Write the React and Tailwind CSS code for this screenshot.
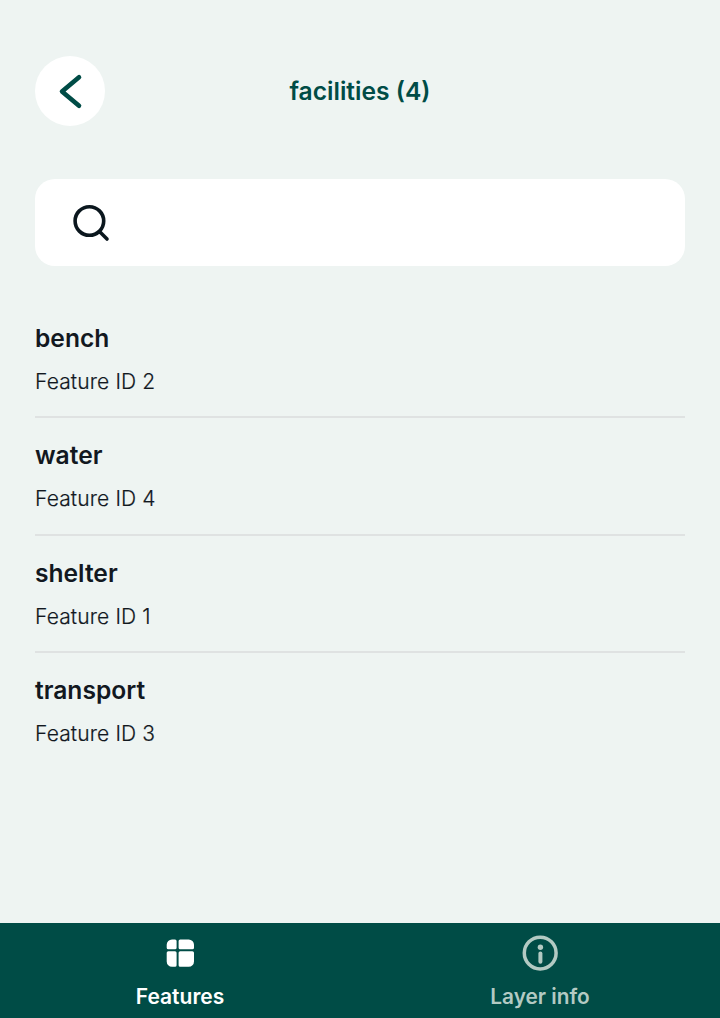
const features = [
  { name: 'bench', id: 2 },
  { name: 'water', id: 4 },
  { name: 'shelter', id: 1 },
  { name: 'transport', id: 3 },
];

export default function App() {
  return (
    <div className="flex h-[1018px] w-full flex-col bg-[#eef4f2] font-['Inter',sans-serif]">
      <header className="mt-14 grid grid-cols-[70px_1fr_70px] items-center px-[35px]">
        <button aria-label="Back" className="flex size-[70px] items-center justify-center rounded-full bg-white">
          <svg width="70" height="70" viewBox="0 0 70 70" fill="none" stroke="#004c46" strokeWidth="4.6">
            <path d="M44 21.2 27 35.4 44 49.8" strokeLinecap="round" strokeLinejoin="round" />
          </svg>
        </button>
        <h1 className="text-center text-[24.6px] leading-8 font-semibold text-[#004c46]">facilities (4)</h1>
      </header>
      <div className="mx-[35px] mt-[53px] flex h-[87px] shrink-0 items-center rounded-[20px] bg-white pl-[35px]">
        <svg width="42" height="42" viewBox="0 0 42 42" fill="none" stroke="#0b171e" strokeWidth="3.6" strokeLinecap="round">
          <circle cx="19.4" cy="19" r="14.3" />
          <path d="m30 30 7 7" />
        </svg>
      </div>
      <main className="mx-[35px] mt-[35px] flex-1">
        {features.map((f) => (
          <div key={f.id} className="flex h-[117.4px] flex-col border-b-2 border-[#dfe2e2] pt-[21px] last:border-0">
            <h2 className="text-[24.6px] leading-8 font-semibold text-[#12181f]">{f.name}</h2>
            <p className="mt-[13px] text-[21px] leading-[30px] font-light tracking-[0.13px] text-[#12181f] [-webkit-text-stroke:0.2px_#12181f]">Feature ID {f.id}</p>
          </div>
        ))}
      </main>
      <nav className="grid h-[95px] shrink-0 grid-cols-2 bg-[#004c46]">
        <button className="flex flex-col items-center pt-3 text-white">
          <svg width="36" height="36" viewBox="0 0 36 36" fill="currentColor">
            <path d="M10 4.5h3a1.6 1.6 0 0 1 1.6 1.6v6.6a1.6 1.6 0 0 1-1.6 1.6H6.3a1.6 1.6 0 0 1-1.6-1.6V9.8A5.3 5.3 0 0 1 10 4.5Z" />
            <path d="M18.2 4.5h8.5A5.3 5.3 0 0 1 32 9.8v2.9a1.6 1.6 0 0 1-1.6 1.6H18.2a1.6 1.6 0 0 1-1.6-1.6V6.1a1.6 1.6 0 0 1 1.6-1.6Z" />
            <path d="M6.3 16.2H13a1.6 1.6 0 0 1 1.6 1.6v12.4a1.6 1.6 0 0 1-1.6 1.6h-3a5.3 5.3 0 0 1-5.3-5.3v-8.7a1.6 1.6 0 0 1 1.6-1.6Z" />
            <path d="M18.2 16.2h12.2a1.6 1.6 0 0 1 1.6 1.6v8.7a5.3 5.3 0 0 1-5.3 5.3h-8.5a1.6 1.6 0 0 1-1.6-1.6V17.8a1.6 1.6 0 0 1 1.6-1.6Z" />
          </svg>
          <span className="mt-[11px] text-[21px] leading-[30px] font-semibold">Features</span>
        </button>
        <button className="flex flex-col items-center pt-3 text-[#b3cac3]">
          <svg width="36" height="36" viewBox="0 0 36 36" fill="none" stroke="currentColor" strokeWidth="3.5">
            <circle cx="18.2" cy="18.1" r="15.9" />
            <path d="M18.4 18.5v8.2" strokeWidth="4" strokeLinecap="round" />
            <circle cx="18.4" cy="12.2" r="2.7" fill="currentColor" stroke="none" />
          </svg>
          <span className="mt-[11px] text-[20.8px] leading-[30px] font-semibold">Layer info</span>
        </button>
      </nav>
    </div>
  );
}
